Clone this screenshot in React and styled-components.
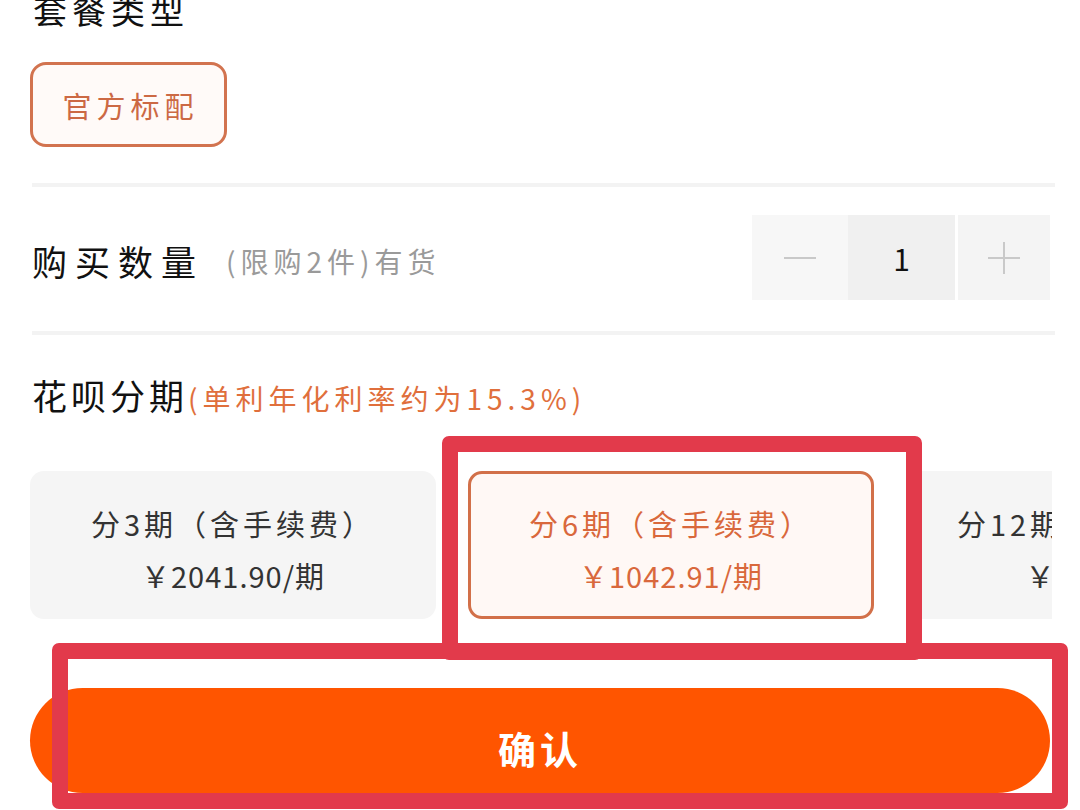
import React from "react";
import styled, { createGlobalStyle } from "styled-components";

const Global = createGlobalStyle`
  html, body { margin: 0; padding: 0; background: #ffffff; }
  body {
    font-family: "Noto Sans CJK SC", "Noto Sans", sans-serif;
    color: #1a1a1a;
    overflow: hidden;
  }
  * { box-sizing: border-box; }
`;

const Page = styled.div`
  position: relative;
  width: 1080px;
  height: 810px;
  overflow: hidden;
  padding: 0 28px 0 30px;
  display: flex;
  flex-direction: column;
`;

const SectionTitle = styled.div`
  font-size: 34px;
  line-height: 40px;
  letter-spacing: 5px;
  font-weight: 400;
  color: #111;
  margin-top: ${(p) => p.$mt || 0}px;
  padding-left: 3px;
  white-space: nowrap;
`;

const Tag = styled.div`
  margin-top: 32px;
  width: 197px;
  height: 85px;
  border: 3px solid #d2734f;
  border-radius: 16px;
  background: #fffaf8;
  color: #cc6944;
  font-size: 29px;
  letter-spacing: 5px;
  display: flex;
  align-items: center;
  justify-content: center;
  padding-left: 4px;
`;

const Divider = styled.div`
  height: 4px;
  background: #f3f3f3;
  margin: ${(p) => p.$mt || 0}px -3px 0 2px;
`;

const QtyRow = styled.div`
  display: flex;
  align-items: center;
  justify-content: space-between;
  padding: 28px 2px 31px 0;
`;

const QtyLabel = styled.div`
  display: flex;
  align-items: center;
  gap: 22px;
  font-size: 35px;
  letter-spacing: 8px;
  padding-left: 2px;
  padding-top: 6px;
  color: #111;
`;

const Hint = styled.span`
  font-size: 28px;
  letter-spacing: 5px;
  color: #9a9a9a;
`;

const Stepper = styled.div`
  display: flex;
  height: 85px;
  gap: 3px;
`;

const StepBox = styled.div`
  width: ${(p) => p.$w}px;
  height: 100%;
  background: ${(p) => p.$bg};
  display: flex;
  align-items: center;
  justify-content: center;
  position: relative;
  font-size: 30px;
  color: #111;
`;

const Joined = styled.div`
  display: flex;
  height: 100%;
`;

const Line = styled.span`
  position: absolute;
  width: ${(p) => (p.$v ? 2 : 32)}px;
  height: ${(p) => (p.$v ? 32 : 2)}px;
  background: #c9c9c9;
`;

const InstallTitle = styled.div`
  margin-top: 35px;
  font-size: 35px;
  line-height: 50px;
  letter-spacing: 4px;
  padding-left: 2px;
  color: #111;
  white-space: nowrap;
`;

const Rate = styled.span`
  font-size: 28px;
  letter-spacing: 5px;
  color: #e06f3c;
`;

const CardRow = styled.div`
  margin-top: 48px;
  display: flex;
  gap: 32px;
  width: 1022px;
  overflow: hidden;
`;

const Card = styled.div`
  flex: 0 0 406px;
  height: 148px;
  border-radius: 14px;
  background: ${(p) => (p.$active ? "#fff8f5" : "#f5f5f5")};
  border: ${(p) => (p.$active ? "3px solid #d27049" : "none")};
  color: ${(p) => (p.$active ? "#d9683c" : "#333")};
  display: flex;
  flex-direction: column;
  align-items: center;
  justify-content: center;
  gap: 8px;
  padding-top: 8px;
  font-size: 29px;
`;

const CardLine = styled.div`
  line-height: 44px;
  white-space: nowrap;
  letter-spacing: ${(p) => p.$ls}px;
`;

const Confirm = styled.button`
  margin-top: 69px;
  width: 1020px;
  height: 105px;
  border: none;
  border-radius: 53px;
  background: #ff5500;
  color: #fff;
  font-family: "Noto Sans CJK SC", sans-serif;
  font-size: 38px;
  font-weight: 700;
  letter-spacing: 4px;
  padding-top: 14px;
  display: flex;
  align-items: center;
  justify-content: center;
`;

const Mark = styled.div`
  position: absolute;
  left: ${(p) => p.$x}px;
  top: ${(p) => p.$y}px;
  width: ${(p) => p.$w}px;
  height: ${(p) => p.$h}px;
  border: 16px solid #e23a4b;
  border-radius: 7px;
  pointer-events: none;
`;

const plans = [
  { n: 3, price: "2041.90" },
  { n: 6, price: "1042.91", active: true },
  { n: 12, price: "541.29" },
];

export default function App() {
  return (
    <>
      <Global />
      <Page>
        <SectionTitle $mt={-10}>套餐类型</SectionTitle>
        <Tag>官方标配</Tag>
        <Divider $mt={36} />
        <QtyRow>
          <QtyLabel>
            购买数量
            <Hint>(限购2件)有货</Hint>
          </QtyLabel>
          <Stepper>
            <Joined>
              <StepBox $w={96} $bg="#f7f7f7">
                <Line />
              </StepBox>
              <StepBox $w={107} $bg="#f0f0f0">1</StepBox>
            </Joined>
            <StepBox $w={92} $bg="#f4f4f4">
              <Line />
              <Line $v />
            </StepBox>
          </Stepper>
        </QtyRow>
        <Divider />
        <InstallTitle>
          花呗分期<Rate>(单利年化利率约为15.3%)</Rate>
        </InstallTitle>
        <CardRow>
          {plans.map((p) => (
            <Card key={p.n} $active={p.active}>
              <CardLine $ls={4}>分{p.n}期（含手续费）</CardLine>
              <CardLine $ls={1}>￥{p.price}/期</CardLine>
            </Card>
          ))}
        </CardRow>
        <Confirm>确认</Confirm>
        <Mark $x={442} $y={436} $w={480} $h={224} />
        <Mark $x={52} $y={643} $w={1016} $h={166} />
      </Page>
    </>
  );
}
